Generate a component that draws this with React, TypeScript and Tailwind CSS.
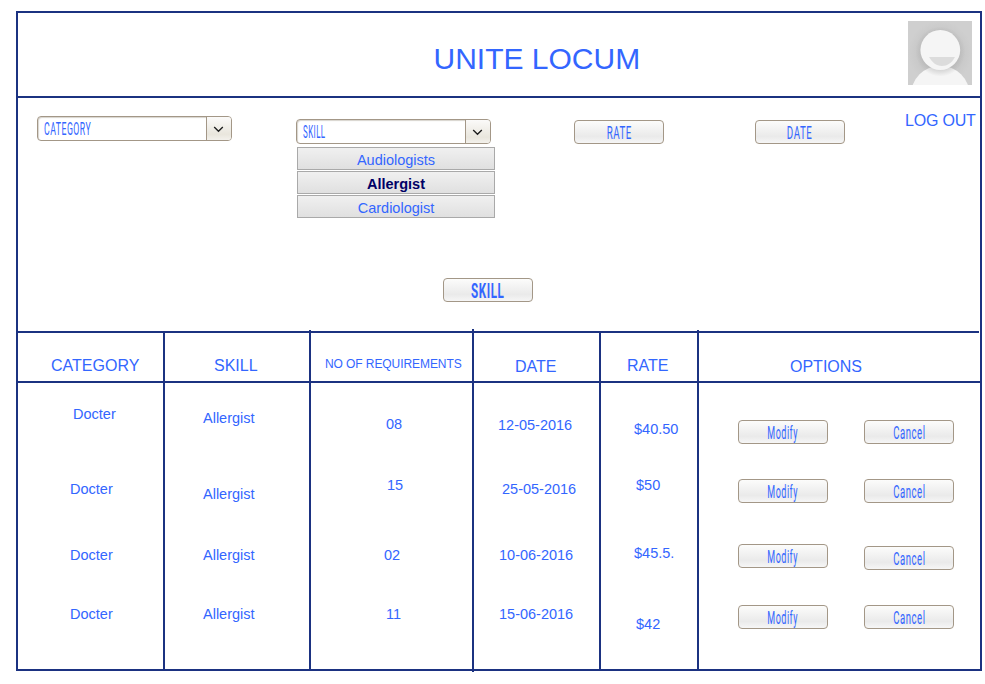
import React from "react";
import { clsx } from "clsx";

type Item = { text: string; pos: string };

const columns: { title: string; titlePos: string; width: string; items: Item[]; overshoot?: string }[] = [
  {
    title: "CATEGORY",
    titlePos: "pl-[33px] pt-[23px] text-[16px]",
    width: "w-[147px]",
    items: [
      { text: "Docter", pos: "mt-[21px] ml-[55px]" },
      { text: "Docter", pos: "mt-[55px] ml-[52px]" },
      { text: "Docter", pos: "mt-[46px] ml-[52px]" },
      { text: "Docter", pos: "mt-[39px] ml-[52px]" },
    ],
  },
  {
    title: "SKILL",
    titlePos: "pl-[49px] pt-[23px] text-[16px]",
    width: "w-[146px]",
    overshoot: "-top-[3px] h-[3px]",
    items: [
      { text: "Allergist", pos: "mt-[25px] ml-[38px]" },
      { text: "Allergist", pos: "mt-[56px] ml-[38px]" },
      { text: "Allergist", pos: "mt-[41px] ml-[38px]" },
      { text: "Allergist", pos: "mt-[39px] ml-[38px]" },
    ],
  },
  {
    title: "NO OF REQUIREMENTS",
    titlePos: "pl-[14px] pt-[21px] text-[12px] tracking-[-0.08px]",
    width: "w-[163px]",
    overshoot: "-top-[4px] h-[343px]",
    items: [
      { text: "08", pos: "mt-[31px] ml-[75px]" },
      { text: "15", pos: "mt-[41px] ml-[76px]" },
      { text: "02", pos: "mt-[50px] ml-[73px]" },
      { text: "11", pos: "mt-[39px] ml-[75px]" },
    ],
  },
  {
    title: "DATE",
    titlePos: "pl-[41px] pt-[24px] text-[16px]",
    width: "w-[127px]",
    items: [
      { text: "12-05-2016", pos: "mt-[32px] ml-[24px]" },
      { text: "25-05-2016", pos: "mt-[44px] ml-[28px]" },
      { text: "10-06-2016", pos: "mt-[46px] ml-[25px]" },
      { text: "15-06-2016", pos: "mt-[39px] ml-[25px]" },
    ],
  },
  {
    title: "RATE",
    titlePos: "pl-[26px] pt-[23px] text-[16px]",
    width: "w-[98px]",
    overshoot: "-top-[3px] h-[3px]",
    items: [
      { text: "$40.50", pos: "mt-[36px] ml-[33px]" },
      { text: "$50", pos: "mt-[36px] ml-[35px]" },
      { text: "$45.5.", pos: "mt-[48px] ml-[33px]" },
      { text: "$42", pos: "mt-[51px] ml-[35px]" },
    ],
  },
];

function Button({ label, scale, className = "" }: { label: string; scale: string; className?: string }) {
  return (
    <button
      className={clsx(
        "flex h-6 w-[90px] shrink-0 items-start justify-center rounded-[4px] border border-[#a39787] bg-linear-to-b from-[#fcfcfb] via-[#eaeaea] via-70% to-[#f6f6f6] font-['Roboto','Liberation_Sans',sans-serif] leading-6 whitespace-nowrap",
        className,
      )}
    >
      <span className={clsx("block", scale)}>{label}</span>
    </button>
  );
}

function Select({ label, scale, className = "" }: { label: string; scale: string; className?: string }) {
  return (
    <div className={clsx("flex h-[25px] w-[195px] shrink-0 overflow-hidden rounded-[4px] border border-[#a39787] bg-white shadow-[inset_1px_1px_1px_#d8d4ce]", className)}>
      <div className="w-[168px] pl-[6px] font-['Roboto','Liberation_Sans',sans-serif] text-[18px] leading-6 tracking-[1px] whitespace-nowrap">
        <span className={clsx("block w-max origin-left", scale)}>{label}</span>
      </div>
      <div className="flex flex-1 items-center justify-center border-l border-[#a39787] bg-linear-to-b from-[#fbfaf9] via-[#e9e6dd] via-75% to-[#f3f1ec] pt-px pr-px">
        <svg width="11" height="7" viewBox="0 0 11 7" fill="none" stroke="#222" strokeWidth="1.4">
          <path d="M1.2 1 L5.5 5.2 L9.8 1" />
        </svg>
      </div>
    </div>
  );
}

function Avatar() {
  return (
    <svg className="mt-2 mr-2 shrink-0" width="64" height="64" viewBox="0 0 64 64">
      <defs>
        <radialGradient id="back">
          <stop offset="0.5" stopColor="#c4c4c4" />
          <stop offset="1" stopColor="#cfcfcf" />
        </radialGradient>
        <radialGradient id="shade">
          <stop offset="0.75" stopColor="#aaaaaa" stopOpacity="0.4" />
          <stop offset="1" stopColor="#aaaaaa" stopOpacity="0" />
        </radialGradient>
      </defs>
      <rect width="64" height="64" fill="url(#back)" />
      <circle cx="32.3" cy="74" r="29.3" fill="#f5f5f5" />
      <circle cx="32.3" cy="30.5" r="25" fill="url(#shade)" />
      <circle cx="32.3" cy="29" r="19.9" fill="#f5f5f5" />
      <path d="M21 36 H47 C44 42 39 45 34 45 C28 45 24 41 21 36Z" fill="#dcdcdc" />
    </svg>
  );
}

export default function App() {
  return (
    <div className="h-[684px] w-[985px] overflow-hidden bg-white pt-[11px] pl-4 font-['Liberation_Sans',Arial,sans-serif] text-[14.5px] text-[#3366ff]">
      <div className="flex h-[660px] w-[966px] flex-col border-2 border-[#1b3281]">
        <header className="flex h-[85px] shrink-0 border-b-2 border-[#1b3281]">
          <h1 className="w-[890px] shrink-0 pt-[26px] pl-[415.5px] text-[30px] leading-10 whitespace-nowrap">UNITE LOCUM</h1>
          <Avatar />
        </header>

        <section className="flex h-[233px] shrink-0 flex-col">
          <div className="flex items-start">
            <Select label="CATEGORY" scale="scale-x-[0.485]" className="mt-[18px] ml-[19px]" />
            <div className="mt-[21px] ml-16 w-[199px] shrink-0">
              <Select label="SKILL" scale="scale-x-[0.44]" />
              <ul className="mt-[3px] ml-px flex flex-col gap-px text-center leading-[22px]">
                {["Audiologists", "Allergist", "Cardiologist"].map((name) => (
                  <li
                    key={name}
                    className={clsx(
                      "h-[23px] border border-[#a9a9a9] bg-linear-to-b from-[#f0f0f0] to-[#e0e0e0] pt-px",
                      name === "Allergist" && "font-bold text-[#000066]",
                    )}
                  >
                    {name}
                  </li>
                ))}
              </ul>
            </div>
            <Button label="RATE" scale="scale-x-[0.54] text-[18px] tracking-[1px]" className="mt-[22px] ml-[79px]" />
            <Button label="DATE" scale="scale-x-[0.54] text-[18px] tracking-[1px]" className="mt-[22px] ml-[91px]" />
            <a className="mt-[13px] ml-[60px] text-[16px] leading-5 tracking-[-0.2px] whitespace-nowrap">LOG OUT</a>
          </div>
          <Button label="SKILL" scale="scale-x-[0.58] text-[20px] tracking-[1px] font-bold" className="mt-[60px] ml-[425px]" />
        </section>

        <section className="flex h-[338px] shrink-0 flex-col">
          <div className="mr-px h-[2px] shrink-0 bg-[#1b3281]" />
          <div className="flex h-[336px]">
            {columns.map((column) => (
              <div key={column.title} className={clsx("relative shrink-0 border-r-2 border-[#1b3281]", column.width)}>
                {column.overshoot && <i className={clsx("absolute -right-[2px] w-[2px] bg-[#1b3281]", column.overshoot)} />}
                <h2 className={clsx("h-[50px] border-b-2 border-[#1b3281] leading-5 whitespace-nowrap", column.titlePos)}>{column.title}</h2>
                {column.items.map((item, i) => (
                  <p key={i} className={clsx("h-5 leading-5 whitespace-nowrap", item.pos)}>
                    {item.text}
                  </p>
                ))}
              </div>
            ))}
            <div className="flex-1">
              <h2 className="h-[50px] border-b-2 border-[#1b3281] pt-[24px] pl-[91px] text-[16px] leading-5">OPTIONS</h2>
              <div className="flex gap-9 pl-[39px]">
                <div>
                  {["mt-[37px]", "mt-[35px]", "mt-[41px]", "mt-[37px]"].map((gap, i) => (
                    <Button key={i} label="Modify" scale="scale-x-[0.5] text-[18px] tracking-[1px]" className={gap} />
                  ))}
                </div>
                <div>
                  {["mt-[37px]", "mt-[35px]", "mt-[43px]", "mt-[35px]"].map((gap, i) => (
                    <Button key={i} label="Cancel" scale="scale-x-[0.53] text-[18px] tracking-[1px]" className={gap} />
                  ))}
                </div>
              </div>
            </div>
          </div>
        </section>
      </div>
    </div>
  );
}
